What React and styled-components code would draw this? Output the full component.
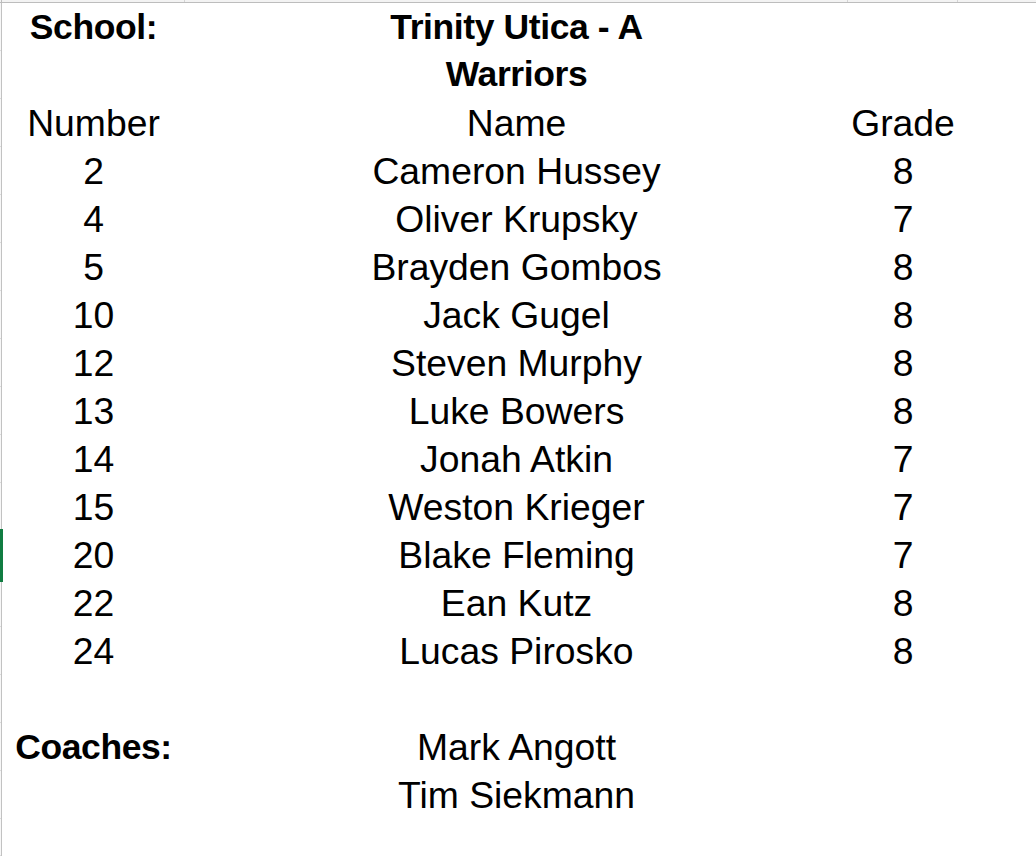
import React from "react";
import styled, { createGlobalStyle, css } from "styled-components";

const Global = createGlobalStyle`
  html, body { margin: 0; padding: 0; background: #fff; }
  body { font-family: "Liberation Sans", Arial, sans-serif; color: #000; overflow: hidden; }
  *, *::before, *::after { box-sizing: border-box; }
`;

const ROW = 48;
const COLS = "2px 183px 663px 110px 1fr";

const Sheet = styled.div`
  display: flex;
  flex-direction: column;
  width: 1036px;
  height: 856px;
  overflow: hidden;
`;

const HeaderBar = styled.div`
  display: grid;
  grid-template-columns: ${COLS};
  height: 3px;
  background: #f3f3f3;
  border-bottom: 1px solid #bdbdbd;
  flex: none;
`;

const HeaderCell = styled.div`
  border-right: 1px solid ${(p) => (p.$last ? "transparent" : p.$corner ? "#bdbdbd" : "#d4d4d4")};
`;

const Row = styled.div`
  display: grid;
  grid-template-columns: ${COLS};
  height: ${(p) => ROW * (p.$lines || 1)}px;
  flex: none;
`;

const RowHeadStack = styled.div`
  position: relative;
  display: flex;
  flex-direction: column;
  background: #f7f7f7;
  border-right: 1px solid #c2c2c2;
  ${(p) =>
    p.$active &&
    css`
      &::after {
        content: "";
        position: absolute;
        left: 0;
        top: -2px;
        bottom: -3px;
        width: 3px;
        background: #107c41;
        z-index: 2;
      }
    `}
`;

const RowHead = styled.div`
  flex: 1;
  border-bottom: 1px solid #dcdcdc;
`;

const Cell = styled.div`
  display: flex;
  align-items: ${(p) => (p.$top ? "flex-start" : "center")};
  justify-content: center;
  text-align: center;
  font-size: ${(p) => (p.$bold ? "35.5px" : "37.3px")};
  font-weight: ${(p) => (p.$bold ? 700 : 400)};
  letter-spacing: ${(p) => (p.$bold ? "-0.4px" : "0")};
  line-height: ${ROW}px;
  white-space: nowrap;
`;

const WrapText = styled.div`
  width: 300px;
  white-space: normal;
  line-height: 47px;
  padding-top: 1px;
`;

const Filler = styled.div`
  flex: 1;
  display: grid;
  grid-template-columns: ${COLS};
`;

const players = [
  ["2", "Cameron Hussey", "8"],
  ["4", "Oliver Krupsky", "7"],
  ["5", "Brayden Gombos", "8"],
  ["10", "Jack Gugel", "8"],
  ["12", "Steven Murphy", "8"],
  ["13", "Luke Bowers", "8"],
  ["14", "Jonah Atkin", "7"],
  ["15", "Weston Krieger", "7"],
  ["20", "Blake Fleming", "7"],
  ["22", "Ean Kutz", "8"],
  ["24", "Lucas Pirosko", "8"],
];

const body = [["Number", "Name", "Grade"], ...players, ["", "", ""]];

function SheetRow({ cells, bold, active }) {
  return (
    <Row>
      <RowHeadStack $active={active}>
        <RowHead />
      </RowHeadStack>
      {cells.map((c, i) => (
        <Cell key={i} $bold={bold && bold[i]}>
          {c}
        </Cell>
      ))}
    </Row>
  );
}

export default function App() {
  return (
    <>
      <Global />
      <Sheet>
        <HeaderBar>
          <HeaderCell $corner />
          <HeaderCell />
          <HeaderCell />
          <HeaderCell />
          <HeaderCell $last />
        </HeaderBar>

        <Row $lines={2}>
          <RowHeadStack>
            <RowHead />
            <RowHead />
          </RowHeadStack>
          <Cell $bold $top>School:</Cell>
          <Cell $bold $top>
            <WrapText>Trinity Utica - A Warriors</WrapText>
          </Cell>
          <Cell />
        </Row>

        {body.map((r, i) => (
          <SheetRow key={i} cells={r} active={r[0] === "20"} />
        ))}

        <SheetRow cells={["Coaches:", "Mark Angott", ""]} bold={[true, false, false]} />
        <SheetRow cells={["", "Tim Siekmann", ""]} />

        <Filler>
          <RowHeadStack>
            <RowHead />
          </RowHeadStack>
        </Filler>
      </Sheet>
    </>
  );
}
